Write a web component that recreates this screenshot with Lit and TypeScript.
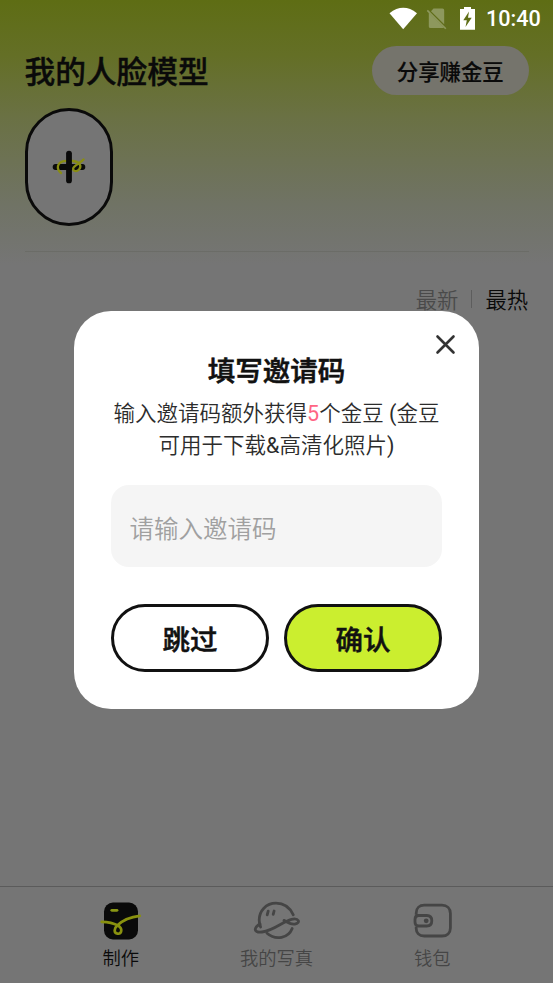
import { LitElement, html, css } from "lit";
import { customElement } from "lit/decorators.js";

@customElement("app-root")
export class AppRoot extends LitElement {
  static styles = css`
    :host {
      display: flex;
      flex-direction: column;
      position: relative;
      box-sizing: border-box;
      width: 100%;
      height: 100vh;
      overflow: hidden;
      font-family: Roboto, "Noto Sans CJK SC", sans-serif;
      font-weight: 350;
      color: #0a0a0a;
      background: linear-gradient(#5e6d14 0, #646f26 55px, #6a7143 115px, #707365 205px, #757575 265px) #757575;
    }
    * { box-sizing: border-box; }
    svg { display: block; overflow: visible; flex: none; }
    .status { display: flex; justify-content: flex-end; height: 37px; }
    .time { font-size: 21.6px; font-weight: 500; line-height: 38px; color: #fff; width: 67px; white-space: nowrap; }
    .header { display: flex; justify-content: space-between; padding: 9px 24.5px 0 24.5px; height: 71px; }
    .title { font-size: 30.7px; font-weight: 500; line-height: 53px; white-space: nowrap; -webkit-text-stroke: 0.4px currentColor; }
    .share { width: 156.5px; height: 49px; border-radius: 25px; background: #75746c; text-align: center; font-size: 21.4px; font-weight: 500; line-height: 53px; -webkit-text-stroke: 0.2px currentColor; }
    .faces { margin: 0 24.5px; height: 144px; border-bottom: 1px solid #6b6c67; }
    .add { display: flex; align-items: center; justify-content: center; width: 88.5px; height: 118px; border: 3px solid #0a0a0a; border-radius: 45px; background: #757575; }
    .sort { display: flex; align-items: center; justify-content: flex-end; gap: 13px; padding-right: 25px; height: 30px; margin-top: 34px; font-size: 21.3px; line-height: 30px; }
    .muted { color: #4a4a4a; }
    .bar { width: 1px; height: 18px; background: #5d5d5d; margin-top: -4px; }
    .nav { display: flex; margin-top: auto; height: 97px; padding: 14px 43px 0; border-top: 1px solid #5b5b5b; }
    .item { flex: 1; display: flex; flex-direction: column; align-items: center; gap: 4px; font-size: 18.3px; line-height: 28px; }
    .dim { color: #454545; }
    .modal { position: absolute; left: 74px; top: 311px; width: 405px; height: 398px; border-radius: 37px; background: #fff; padding: 42px 37px 0; color: #111; }
    .close { position: absolute; right: 24px; top: 24px; }
    .heading { text-align: center; font-size: 27.5px; line-height: 38px; font-weight: 500; -webkit-text-stroke: 0.6px currentColor; }
    .desc { text-align: center; margin-top: 7px; font-size: 21.5px; line-height: 32px; color: #2c2c2c; white-space: nowrap; }
    .latin { font-weight: 400; }
    .num { color: #ff6584; }
    .input { margin-top: 23px; height: 82px; border-radius: 18px; padding-left: 18.5px; background: #f5f5f5; color: #a0a0a0; font-size: 24.5px; line-height: 89px; }
    .actions { display: flex; gap: 15px; margin-top: 37px; }
    .btn { flex: 1; height: 68px; border: 3px solid #111; border-radius: 34px; text-align: center; font-size: 27.5px; line-height: 67px; font-weight: 500; -webkit-text-stroke: 0.5px currentColor; }
    .ok { background: #cbee2f; }
  `;

  render() {
    return html`
      <div class="status">
        <svg width="97" height="37" viewBox="389 0 97 37">
          <path d="M389.5 13.2Q403.2 2.5 417 13.2L403.2 29.2Z" fill="#fff" />
          <path d="M433.5 8.5H442.5Q444.2 8.5 444.2 10.2V24.2L431 11.2ZM428.8 12.5L443.8 27.5Q443.5 28 442.5 28H430.5Q428.8 28 428.8 26.4Z" fill="#8d985d" />
          <path d="M427.3 10.4L445.8 28.8" stroke="#8d985d" stroke-width="1.6" />
          <path d="M460 9H464V7H471V9H475V29.8H460Z" fill="#fff" />
          <path d="M469 11.5L463.3 20.2H466.8L465.5 27L471.7 17.8H468Z" fill="#5f6e17" />
        </svg>
        <div class="time">10:40</div>
      </div>
      <div class="header">
        <div class="title">我的人脸模型</div>
        <div class="share">分享赚金豆</div>
      </div>
      <div class="faces">
        <div class="add">
          <svg width="34" height="34" viewBox="0 0 34 34" fill="none" stroke-linecap="round">
            <path d="M3.6 17H30.4" stroke="#0a0a0a" stroke-width="5.8" />
            <path d="M9 23C4 19 5 12.5 12 11.2C15 10.6 18 10.6 21 11C28 12 30 16 27 19.5C24 22.5 19 20.5 22 17C24.5 14 29 12.5 31.5 9.5" stroke="#898d14" stroke-width="2.3" />
            <path d="M17 3.6V30.4" stroke="#0a0a0a" stroke-width="5.8" />
          </svg>
        </div>
      </div>
      <div class="sort"><span class="muted">最新</span><span class="bar"></span><span>最热</span></div>
      <div class="nav">
        <div class="item">
          <svg width="40" height="40" viewBox="101 901 40 40" fill="none" stroke-linecap="round">
            <rect x="104" y="902.5" width="34" height="37" rx="9" fill="#0a0a0a" />
            <path d="M111.8 910.3H117" stroke="#899614" stroke-width="2.8" />
            <path d="M101.7 921.8C107 922 113 922.8 117.5 925.2C123.5 928.5 121.5 934.2 117.5 933.7C113.5 933.2 114 928 117.5 925.2C122.5 920.5 129 917 139.7 915.8" stroke="#89910f" stroke-width="2.7" />
          </svg>
          <div>制作</div>
        </div>
        <div class="item dim">
          <svg width="46" height="40" viewBox="254 901 46 40" fill="none" stroke="#454545" stroke-width="2.8" stroke-linecap="round">
            <path d="M293.3 914.8C289.5 907 282.8 903.2 276 903.2C266 903.2 259.2 911 259.2 920C259.2 922.5 259.7 925 260.6 927M267 933.3C276 941 288.5 938 292.2 928.5" />
            <path d="M260 924C252.5 928.5 254.5 932.8 262 932C274 930.5 282.5 921.5 291.5 919.3C299 917.7 301 923 294.8 924.1C290 925 287.5 921.8 284 920.4" />
            <path d="M267.2 914.8L268.2 911.2M273.2 914.3L274.1 911" />
          </svg>
          <div>我的写真</div>
        </div>
        <div class="item dim">
          <svg width="40" height="40" viewBox="412 901 40 40" fill="none" stroke="#454545" stroke-width="2.8">
            <path d="M416.2 914.8V913C416.2 908 419.7 905.2 424.2 905.2H442C447 905.2 450.4 908.6 450.4 913.5V928C450.4 933 447 936 442 936H424.2C419 936 416.2 932.6 416.2 928.5V926.7" />
            <path d="M416 915.5H426.8Q431.8 915.5 431.8 920.8Q431.8 926 426.8 926H418.5Q415 926 415 922V919.5Q415 915.5 418.5 915.5" />
            <circle cx="426.2" cy="920.8" r="2.4" fill="#454545" stroke="none" />
          </svg>
          <div>钱包</div>
        </div>
      </div>
      <div class="modal">
        <svg class="close" width="19" height="19" viewBox="0 0 19 19" fill="none" stroke="#333" stroke-width="2.6" stroke-linecap="round">
          <path d="M1.5 1.5L17.5 17.5M17.5 1.5L1.5 17.5" />
        </svg>
        <div class="heading">填写邀请码</div>
        <div class="desc">输入邀请码额外获得<span class="latin num">5</span>个金豆<span class="latin"> (</span>金豆<br />可用于下载<span class="latin">&amp;</span>高清化照片<span class="latin">)</span></div>
        <div class="input">请输入邀请码</div>
        <div class="actions">
          <div class="btn">跳过</div>
          <div class="btn ok">确认</div>
        </div>
      </div>
    `;
  }
}
